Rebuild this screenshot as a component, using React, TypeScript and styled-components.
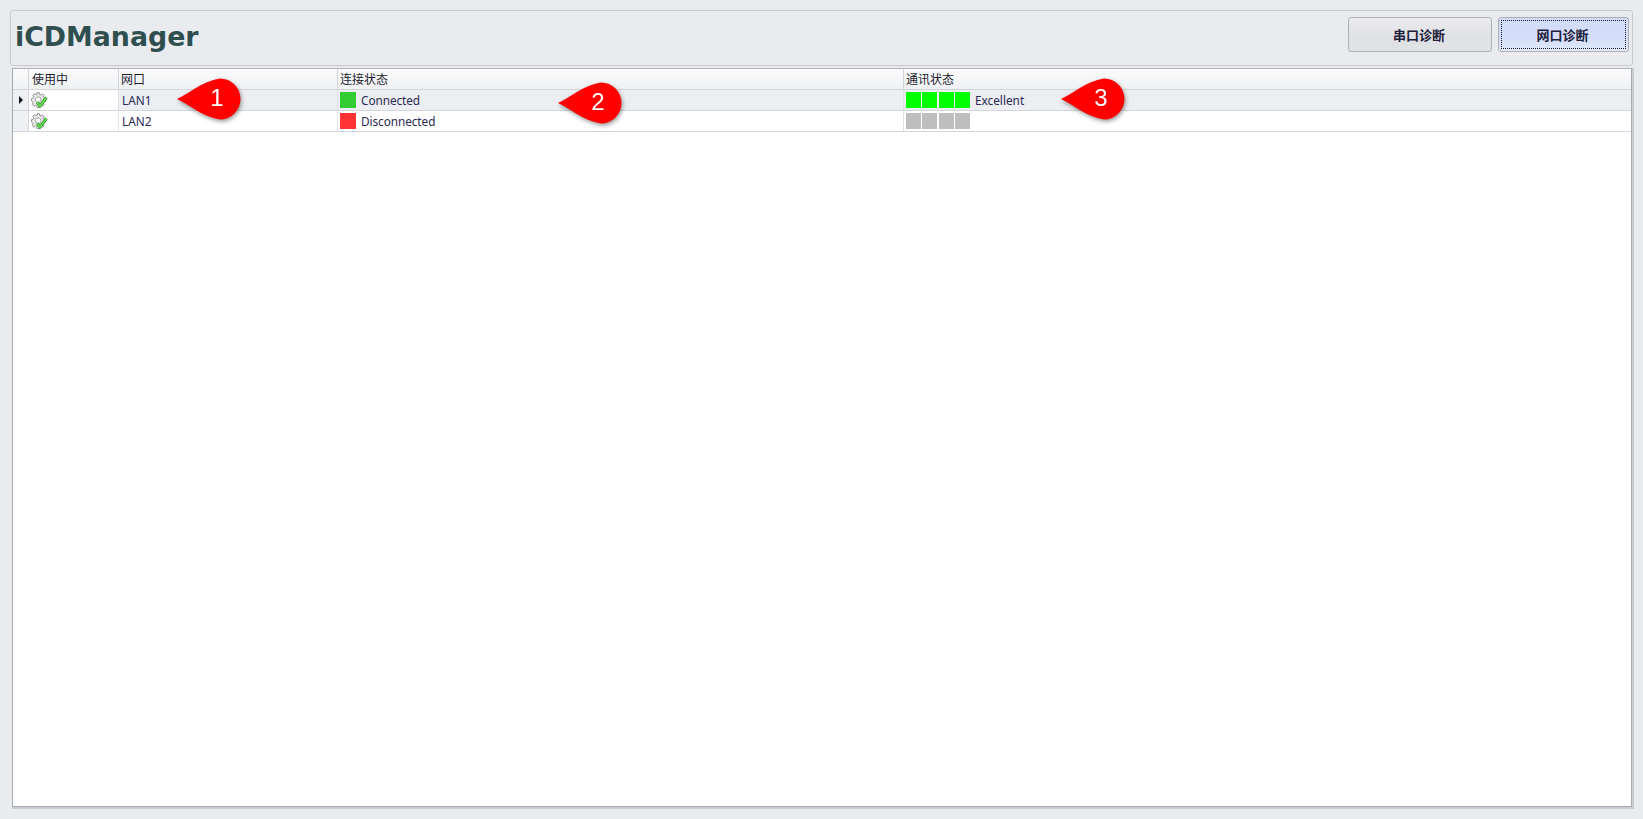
import React from "react";
import styled, { createGlobalStyle } from "styled-components";

const Global = createGlobalStyle`
  html, body { margin: 0; padding: 0; height: 100%; background: #e9ebef; overflow: hidden; }
  #root { height: 100%; }
`;

const Page = styled.div`
  position: relative;
  box-sizing: border-box;
  height: 819px;
  padding: 10px 10px 10px 10px;
  display: flex;
  flex-direction: column;
  gap: 2px;
  background: #e9ebef;
  font-family: "Noto Sans", "Noto Sans CJK SC", sans-serif;
`;

const Header = styled.header`
  box-sizing: border-box;
  height: 56px;
  flex: none;
  display: flex;
  align-items: flex-start;
  justify-content: space-between;
  padding: 6px 3px 0 4px;
  border: 1px solid #c9cbd1;
  border-radius: 3px;
  background: #e9ebef;
`;

const Title = styled.h1`
  margin: 3px 0 0;
  font: bold 26.8px/34px "DejaVu Sans", sans-serif;
  color: #2f4f4f;
`;

const Buttons = styled.div`
  display: flex;
  gap: 6px;
`;

const ActionButton = styled.button<{ $active?: boolean }>`
  box-sizing: border-box;
  width: ${(p) => (p.$active ? 131 : 144)}px;
  height: 35px;
  border: 1px solid #aeb0b8;
  border-radius: 3px;
  padding: 0 2px 0 0;
  font: bold 13px "Noto Sans CJK SC", sans-serif;
  color: #20203a;
  background: ${(p) =>
    p.$active
      ? "linear-gradient(#d2dcf9, #d4def9 60%, #e2e9fb)"
      : "linear-gradient(#ececef, #dfe0e4 60%, #e2e3e7)"};
  outline: ${(p) => (p.$active ? "1px dotted #1a1a2a" : "none")};
  outline-offset: -4px;
`;

const GridFrame = styled.div`
  box-sizing: border-box;
  flex: 1;
  margin: 0 1px 2px 2px;
  border: 1px solid #a6a8b2;
  box-shadow: 1px 1px 0 1px #c9cbd1, -1px -1px 0 0 #e9ebef;
  border-top-color: #b0b2bb;
  background: #fff;
`;

const Row = styled.div`
  display: grid;
  grid-template-columns: 16px 90px 219px 566px 1fr;
  height: 21px;
  box-sizing: border-box;
  border-bottom: 1px solid #d3d5db;
`;

const HeadCell = styled.div`
  box-sizing: border-box;
  padding-left: 2px;
  border-right: 1px solid #d3d5db;
  background: linear-gradient(#fbfbfc, #f0f1f3);
  font: 12px/20px "Noto Sans CJK SC", sans-serif;
  color: #1c1c2e;
  &:nth-child(2) { padding-left: 3px; }
  &:last-child { border-right: 0; }
`;

const Indicator = styled.div<{ $current?: boolean }>`
  border-right: 1px solid #d3d5db;
  background: #eef0f3;
  display: flex;
  align-items: center;
  justify-content: center;
  &::after {
    content: "";
    display: ${(p) => (p.$current ? "block" : "none")};
    border-left: 4px solid #15151f;
    border-top: 4px solid transparent;
    border-bottom: 4px solid transparent;
  }
`;

const Cell = styled.div<{ $selected?: boolean }>`
  box-sizing: border-box;
  display: flex;
  align-items: center;
  padding-left: 2px;
  gap: 5px;
  border-right: 1px solid #e2e3e8;
  background: ${(p) => (p.$selected ? "#eceef1" : "#fff")};
  font-size: 11.8px;
  color: #2a2a55;
  white-space: nowrap;
  &:last-child { border-right: 0; }
`;

const LanCell = styled(Cell)`
  padding-left: 3px;
`;

const Swatch = styled.span<{ $color: string }>`
  width: 16px;
  height: 16px;
  flex: none;
  background: ${(p) => p.$color};
`;

const StatusText = styled.span`
  letter-spacing: -0.07px;
`;

const BarStack = styled.span`
  display: flex;
  gap: 1.33px;
`;

const Bar = styled.span<{ $color: string }>`
  width: 15px;
  height: 16px;
  background: ${(p) => p.$color};
`;

const Callout = styled.div<{ $x: number; $y: number }>`
  position: absolute;
  left: ${(p) => p.$x}px;
  top: ${(p) => p.$y}px;
  width: 66px;
  height: 44px;
  filter: drop-shadow(1px 2px 2px rgba(0, 0, 0, 0.4));
`;

const CalloutDigit = styled.span`
  position: absolute;
  left: 26px;
  width: 28px;
  top: 0;
  text-align: center;
  font: 24px/42px "Liberation Sans", sans-serif;
  color: #fff;
`;

const GearCheck = () => (
  <svg width="17" height="17" viewBox="0 0 17 17" style={{ flex: "none" }}>
    <path
      d="M6 .7h2.400l.4 1.800 1.200.5 1.600-1 1.700 1.700-1 1.600.5 1.200 1.800.4v2.400l-1.800.4-.5 1.200 1 1.600-1.700 1.700-1.600-1-1.200.5-.4 1.800H6l-.4-1.800-1.200-.5-1.600 1-1.700-1.700 1-1.600-.5-1.200L.5 8.900V6.500l1.800-.4.5-1.200-1-1.600 1.700-1.700 1.600 1 1.200-.5z"
      fill="#e8e8e8"
      stroke="#8a8a8a"
      strokeWidth="0.9"
    />
    <circle cx="7.200" cy="7.700" r="2.800" fill="#fff" stroke="#9a9a9a" strokeWidth="0.9" />
    <path d="M6 10.200l3 3.800 6.500-8.500" fill="none" stroke="#2f9e2c" strokeWidth="3" />
    <path d="M6 10.200l3 3.800 6.500-8.500" fill="none" stroke="#6fdc55" strokeWidth="1.400" />
  </svg>
);

const CalloutShape = () => (
  <svg width="66" height="44" viewBox="0 0 66 44">
    <path d="M0 22C10 18 25 4 43 1.500a20.500 20.500 0 1 1 0 41C25 40 10 26 0 22z" fill="#ff0000" />
  </svg>
);

const rows = [
  { lan: "LAN1", color: "#33cc33", text: "Connected", bar: "#00ff00", quality: "Excellent", selected: true },
  { lan: "LAN2", color: "#ff3333", text: "Disconnected", bar: "#bebebe", quality: "", selected: false },
];

const callouts = [
  { n: "1", x: 177, y: 77 },
  { n: "2", x: 558, y: 81 },
  { n: "3", x: 1061, y: 77 },
];

export default function App() {
  return (
    <Page>
      <Global />
      <Header>
        <Title>iCDManager</Title>
        <Buttons>
          <ActionButton>串口诊断</ActionButton>
          <ActionButton $active>网口诊断</ActionButton>
        </Buttons>
      </Header>
      <GridFrame>
        <Row>
          <HeadCell />
          <HeadCell>使用中</HeadCell>
          <HeadCell>网口</HeadCell>
          <HeadCell>连接状态</HeadCell>
          <HeadCell>通讯状态</HeadCell>
        </Row>
        {rows.map((r) => (
          <Row key={r.lan}>
            <Indicator $current={r.selected} />
            <Cell>
              <GearCheck />
            </Cell>
            <LanCell $selected={r.selected}>{r.lan}</LanCell>
            <Cell $selected={r.selected}>
              <Swatch $color={r.color} />
              <StatusText>{r.text}</StatusText>
            </Cell>
            <Cell $selected={r.selected}>
              <BarStack>
                {[0, 1, 2, 3].map((i) => (
                  <Bar $color={r.bar} key={i} />
                ))}
              </BarStack>
              {r.quality}
            </Cell>
          </Row>
        ))}
      </GridFrame>
      {callouts.map((c) => (
        <Callout $x={c.x} $y={c.y} key={c.n}>
          <CalloutShape />
          <CalloutDigit>{c.n}</CalloutDigit>
        </Callout>
      ))}
    </Page>
  );
}
